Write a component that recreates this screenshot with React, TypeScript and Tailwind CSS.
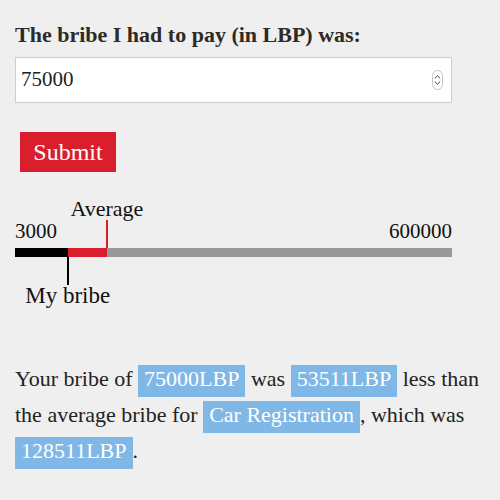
import React from "react";

const MIN = 3000;
const MAX = 600000;
const myBribe = 75000;
const average = 128511;

const pct = (v: number) => ((v - MIN) / (MAX - MIN)) * 100;

function Tag({ children }: { children: React.ReactNode }) {
    return (
        <span className="inline-block bg-[#7fb8e6] text-white px-[6px] leading-[28px] pb-[4px]">
            {children}
        </span>
    );
}

export default function App() {
    const mine = pct(myBribe);
    const avg = pct(average);

    return (
        <div
            className="min-h-screen w-full bg-[#efefef] text-[#222] px-[15px] pt-[23px]"
            style={{ fontFamily: '"Liberation Serif", "Times New Roman", serif' }}
        >
            <h1 className="text-[22px] leading-[24px] font-bold text-[#2e2a26]">
                The bribe I had to pay (in LBP) was:
            </h1>

            {/* number field with a safari style stepper */}
            <div className="mt-[10px] w-[437px] h-[46px] bg-white border border-[#cfcfcf] flex items-center pl-[5px] pr-[8px]">
                <input
                    type="text"
                    defaultValue="75000"
                    className="flex-1 bg-transparent outline-none text-[21px] text-[#222]"
                    style={{ fontFamily: '"Liberation Serif", serif' }}
                />
                <div className="w-[11px] h-[20px] rounded-full border border-[#c4c4c4] flex flex-col items-center justify-center gap-[2px]">
                    <svg width="7" height="4" viewBox="0 0 7 4">
                        <path d="M0.8 3.4 L3.5 0.8 L6.2 3.4" fill="none" stroke="#444" strokeWidth="1" />
                    </svg>
                    <svg width="7" height="4" viewBox="0 0 7 4">
                        <path d="M0.8 0.6 L3.5 3.2 L6.2 0.6" fill="none" stroke="#444" strokeWidth="1" />
                    </svg>
                </div>
            </div>

            <button className="mt-[29px] ml-[5px] w-[96px] h-[40px] bg-[#d91e2d] text-white text-[24px] leading-none flex items-center justify-center">
                Submit
            </button>

            {/* bribe scale */}
            <div className="relative mt-[26px] w-[437px] pt-[21px] pb-[50px]">
                <div
                    className="absolute top-0 -translate-x-1/2 text-[22px] leading-[22px] text-[#111] whitespace-nowrap"
                    style={{ left: `${avg}%` }}
                >
                    Average
                </div>
                <div className="absolute top-[22px] h-[28px] w-[2px] bg-[#d91e2d]" style={{ left: `calc(${avg}% - 1px)` }} />

                <div className="flex justify-between text-[21px] leading-[24px] text-[#111]">
                    <span>3000</span>
                    <span>600000</span>
                </div>

                <div className="mt-[5px] h-[9px] flex bg-[#999]">
                    <div className="h-full bg-black" style={{ width: `${mine}%` }} />
                    <div className="h-full bg-[#d91e2d]" style={{ width: `${avg - mine}%` }} />
                </div>

                <div className="absolute h-[28px] w-[2px] bg-black" style={{ top: 59, left: `calc(${mine}% - 1px)` }} />
                <div
                    className="absolute -translate-x-1/2 text-[23px] leading-[22px] text-[#111] whitespace-nowrap"
                    style={{ top: 87, left: `${mine}%` }}
                >
                    My bribe
                </div>
            </div>

            <p className="mt-[54px] w-[470px] text-[22px] leading-[36px] text-[#222]">
                {"Your bribe of "}
                <Tag>75000LBP</Tag>
                {" was "}
                <Tag>53511LBP</Tag>
                {" less than "}
                {"the average bribe for "}
                <Tag>Car Registration</Tag>
                {", which was "}
                <Tag>128511LBP</Tag>
                {"."}
            </p>
        </div>
    );
}
